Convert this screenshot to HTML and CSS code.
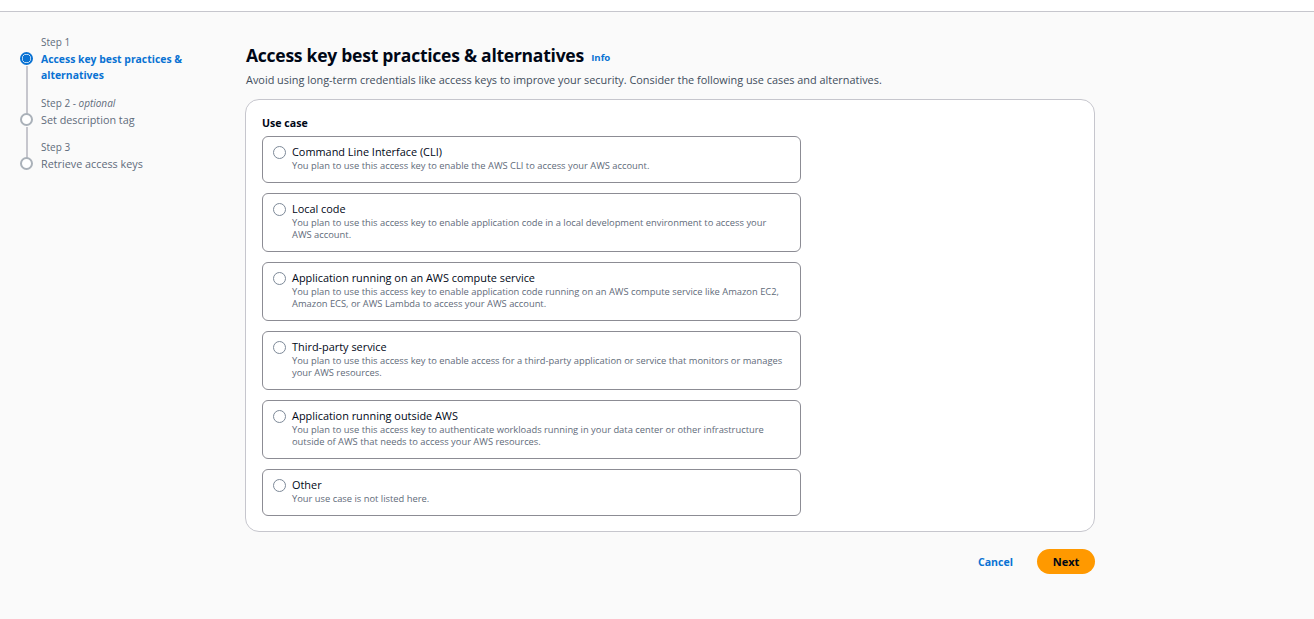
FILE: index.html
```html
<!DOCTYPE html>
<html lang="en">
<head>
<meta charset="utf-8">
<title>Create access key</title>
<link rel="stylesheet" href="styles.css">
</head>
<body>
<div class="topbar"></div>
<div class="layout">
  <nav class="steps">
    <div class="step step-active step-first">
      <div class="step-rail-top"></div>
      <div class="step-label">Step 1</div>
      <div class="step-marker"><span class="step-dot"></span><span class="step-line"></span></div>
      <div class="step-title">Access key best practices &amp; alternatives</div>
    </div>
    <div class="step">
      <div class="step-rail-top"><span class="step-line"></span></div>
      <div class="step-label">Step 2 - <em>optional</em></div>
      <div class="step-marker"><span class="step-dot"></span><span class="step-line"></span></div>
      <div class="step-title">Set description tag</div>
    </div>
    <div class="step step-last">
      <div class="step-rail-top"><span class="step-line"></span></div>
      <div class="step-label">Step 3</div>
      <div class="step-marker"><span class="step-dot"></span></div>
      <div class="step-title">Retrieve access keys</div>
    </div>
  </nav>

  <main class="main">
    <header class="page-header">
      <h1 class="page-title">Access key best practices &amp; alternatives <a class="info-link" href="#">Info</a></h1>
      <p class="page-desc">Avoid using long-term credentials like access keys to improve your security. Consider the following use cases and alternatives.</p>
    </header>

    <section class="card">
      <div class="field-label">Use case</div>
      <div class="options">
        <label class="option">
          <span class="radio"></span>
          <span class="option-text">
            <span class="option-title">Command Line Interface (CLI)</span>
            <span class="option-desc">You plan to use this access key to enable the AWS CLI to access your AWS account.</span>
          </span>
        </label>
        <label class="option">
          <span class="radio"></span>
          <span class="option-text">
            <span class="option-title">Local code</span>
            <span class="option-desc">You plan to use this access key to enable application code in a local development environment to access your AWS account.</span>
          </span>
        </label>
        <label class="option">
          <span class="radio"></span>
          <span class="option-text">
            <span class="option-title">Application running on an AWS compute service</span>
            <span class="option-desc">You plan to use this access key to enable application code running on an AWS compute service like Amazon EC2, Amazon ECS, or AWS Lambda to access your AWS account.</span>
          </span>
        </label>
        <label class="option">
          <span class="radio"></span>
          <span class="option-text">
            <span class="option-title">Third-party service</span>
            <span class="option-desc">You plan to use this access key to enable access for a third-party application or service that monitors or manages your AWS resources.</span>
          </span>
        </label>
        <label class="option">
          <span class="radio"></span>
          <span class="option-text">
            <span class="option-title">Application running outside AWS</span>
            <span class="option-desc">You plan to use this access key to authenticate workloads running in your data center or other infrastructure outside of AWS that needs to access your AWS resources.</span>
          </span>
        </label>
        <label class="option">
          <span class="radio"></span>
          <span class="option-text">
            <span class="option-title">Other</span>
            <span class="option-desc">Your use case is not listed here.</span>
          </span>
        </label>
      </div>
    </section>

    <div class="actions">
      <a class="btn-link" href="#">Cancel</a>
      <button class="btn-primary" type="button">Next</button>
    </div>
  </main>
</div>
</body>
</html>
```

FILE: styles.css
```css
* { box-sizing: border-box; }

html, body {
  margin: 0;
  padding: 0;
}

body {
  background: #fafafa;
  font-family: "Open Sans", "Noto Sans", Arial, sans-serif;
  color: #000716;
  height: 619px;
  overflow: hidden;
}

.topbar {
  height: 12px;
  background: #ffffff;
  border-bottom: 1px solid #c6c6cd;
}

.layout {
  display: flex;
  align-items: flex-start;
}

/* ---------- steps ---------- */
.steps {
  width: 245px;
  flex: none;
  padding: 22px 0 0 20px;
}

.step {
  display: grid;
  grid-template-columns: 13px 1fr;
  column-gap: 8px;
}

.step-rail-top {
  grid-column: 1;
  grid-row: 1;
  display: flex;
  flex-direction: column;
  align-items: center;
}

.step-label {
  grid-column: 2;
  grid-row: 1;
  font-size: 10px;
  line-height: 16px;
  color: #5f6b7a;
  margin-bottom: 1px;
}

.step-label em {
  font-style: italic;
}

.step-marker {
  grid-column: 1;
  grid-row: 2;
  display: flex;
  flex-direction: column;
  align-items: center;
  padding-top: 1px;
}

.step-dot {
  width: 13px;
  height: 13px;
  border-radius: 50%;
  border: 2px solid #aab1b9;
  background: #ffffff;
  flex: none;
}

.step-active .step-dot {
  border-color: #0972d3;
  background: radial-gradient(circle, #0972d3 0 3.6px, #ffffff 4.2px);
}

.step-line {
  width: 2px;
  background: #c6c6cd;
  flex: 1;
}

.step-marker .step-line {
  margin-top: 1px;
}

.step-rail-top .step-line {
  margin-bottom: -2px;
}

.step-title {
  grid-column: 2;
  grid-row: 2;
  font-size: 10.8px;
  line-height: 16px;
  color: #5f6b7a;
  padding-bottom: 11.5px;
}

.step-active .step-title {
  color: #0972d3;
  font-weight: 700;
  font-size: 10.4px;
}

/* ---------- main ---------- */
.main {
  width: 850px;
  flex: none;
  padding-top: 30px;
}

.page-header {
  padding-left: 1px;
}

.page-title {
  margin: 0;
  font-size: 17.5px;
  line-height: 26px;
  font-weight: 700;
  color: #000716;
  letter-spacing: -0.25px;
}

.info-link {
  font-size: 9.6px;
  font-weight: 700;
  color: #0972d3;
  text-decoration: none;
  margin-left: 3px;
  letter-spacing: 0;
  vertical-align: 1px;
}

.page-desc {
  margin: 1px 0 0;
  font-size: 10.9px;
  line-height: 16px;
  color: #414d5c;
}

.card {
  margin-top: 11px;
  background: #ffffff;
  border: 1px solid #c6c6cd;
  border-radius: 14px;
  padding: 15px 16px 15px 16px;
}

.field-label {
  font-size: 10.6px;
  font-weight: 700;
  line-height: 16px;
  color: #000716;
  margin-bottom: 5px;
}

.options {
  display: flex;
  flex-direction: column;
  gap: 9.6px;
  width: 539px;
}

.option {
  display: flex;
  align-items: flex-start;
  gap: 6px;
  border: 1px solid #8c8c94;
  border-radius: 6px;
  padding: 7px 15px 9.5px 10px;
  background: #ffffff;
}

.radio {
  width: 13px;
  height: 13px;
  border: 1px solid #7d8998;
  border-radius: 50%;
  flex: none;
  margin-top: 2px;
  background: #ffffff;
}

.option-text {
  display: flex;
  flex-direction: column;
}

.option-title {
  font-size: 10.9px;
  line-height: 16px;
  color: #000716;
}

.option-desc {
  font-size: 9.35px;
  line-height: 12.5px;
  color: #5f6b7a;
}

/* ---------- actions ---------- */
.actions {
  display: flex;
  justify-content: flex-end;
  align-items: center;
  gap: 24px;
  margin-top: 17px;
}

.btn-link {
  font-size: 10.6px;
  font-weight: 700;
  color: #0972d3;
  text-decoration: none;
  margin-top: 1px;
}

.btn-primary {
  width: 58px;
  height: 25px;
  border: none;
  border-radius: 13px;
  background: #ff9900;
  color: #000716;
  font-family: inherit;
  font-size: 11px;
  font-weight: 700;
  padding: 0;
}
```
